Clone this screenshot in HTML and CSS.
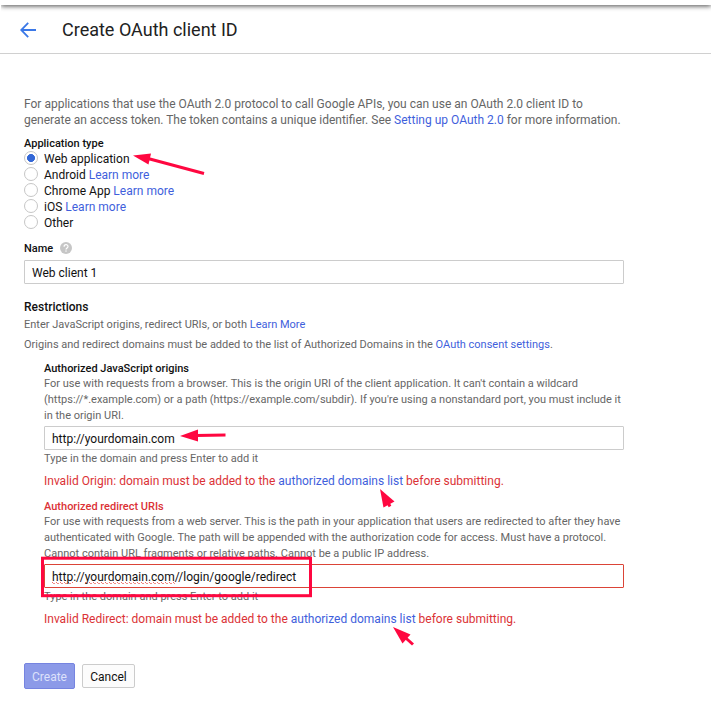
FILE: index.html
```html
<!DOCTYPE html>
<html lang="en">
<head>
<meta charset="utf-8">
<title>Create OAuth client ID</title>
<link rel="stylesheet" href="styles.css">
</head>
<body>
<div class="appbar"></div>
<header class="header">
  <svg class="back" width="16" height="16" viewBox="0 0 16 16"><path d="M16 8H1.5M8.2 .8L1.2 8l7 7.2" fill="none" stroke="#3b78e7" stroke-width="1.8"/></svg>
  <h1>Create OAuth client ID</h1>
</header>
<main class="content">
  <p class="intro">For applications that use the OAuth 2.0 protocol to call Google APIs, you can use an OAuth 2.0 client ID to generate an access token. The token contains a unique identifier. See <a>Setting up OAuth 2.0</a> for more information.</p>
  <div class="label type-label">Application type</div>
  <ul class="radios">
    <li><span class="radio checked"></span>Web application</li>
    <li><span class="radio"></span><span>Android <a>Learn more</a></span></li>
    <li><span class="radio"></span><span>Chrome App <a>Learn more</a></span></li>
    <li><span class="radio"></span><span>iOS <a>Learn more</a></span></li>
    <li><span class="radio"></span>Other</li>
  </ul>
  <div class="label name-label">Name
    <svg width="12" height="12" viewBox="0 0 12 12"><circle cx="6" cy="6" r="6" fill="#c6c6c6"/><path d="M4.1 4.7C4.1 2 8 2.1 8 4.5 8 5.9 6 6 6 7.6" fill="none" stroke="#fff" stroke-width="1.2"/><rect x="5.4" y="8.4" width="1.2" height="1.3" fill="#fff"/></svg>
  </div>
  <div class="field">Web client 1</div>
  <h2>Restrictions</h2>
  <p class="small">Enter JavaScript origins, redirect URIs, or both <a>Learn More</a></p>
  <p class="small domains">Origins and redirect domains must be added to the list of Authorized Domains in the <a>OAuth consent settings</a>.</p>
  <section class="group">
    <div class="label">Authorized JavaScript origins</div>
    <p class="small">For use with requests from a browser. This is the origin URI of the client application. It can't contain a wildcard (https://*.example.com) or a path (https://example.com/subdir). If you're using a nonstandard port, you must include it in the origin URI.</p>
    <div class="field">http://yourdomain.com</div>
    <p class="small hint">Type in the domain and press Enter to add it</p>
    <p class="error">Invalid Origin: domain must be added to the <a>authorized domains list</a> before submitting.</p>
  </section>
  <section class="group redirect">
    <div class="label invalid">Authorized redirect URIs</div>
    <p class="small">For use with requests from a web server. This is the path in your application that users are redirected to after they have authenticated with Google. The path will be appended with the authorization code for access. Must have a protocol. Cannot contain URL fragments or relative paths. Cannot be a public IP address.</p>
    <div class="field invalid-field"><span class="spell">http</span>://<span class="spell">yourdomain.com</span>//login/google/redirect</div>
    <p class="small hint">Type in the domain and press Enter to add it</p>
    <p class="error">Invalid Redirect: domain must be added to the <a>authorized domains list</a> before submitting.</p>
  </section>
  <div class="actions">
    <button class="create">Create</button>
    <button class="cancel">Cancel</button>
  </div>
</main>
<svg class="marks" width="711" height="714" viewBox="0 0 711 714">
  <g fill="none" stroke="#ff0740" stroke-width="3">
    <path d="M148 158.500L204 173.500"/>
    <path d="M196 435.500L225.500 435"/>
    <path d="M387 501L390 506.500"/>
    <path d="M403 635.500L413 644.500"/>
    <rect x="42.500" y="558.200" width="268" height="37.500"/>
  </g>
  <g fill="#ff0740">
    <path d="M133 155.500L151 153.500L148.500 164.500Z"/>
    <path d="M180 436L198 429.500V441.500Z"/>
    <path d="M380 489L394.500 501.500L383.500 507.500Z"/>
    <path d="M393 627L410.500 634.500L402.500 643.500Z"/>
  </g>
</svg>
</body>
</html>
```
FILE: styles.css
```css
* { box-sizing: border-box; }
body {
  margin: 0;
  height: 714px;
  overflow: hidden;
  position: relative;
  background: #fff;
  color: #111;
  font: 12px/16px Roboto, sans-serif;
}
h1, h2, p, ul { margin: 0; padding: 0; font-weight: 400; }
a { color: #3f5fdc; }
.appbar {
  height: 5px;
  margin-left: 1px;
  background: #fff;
  box-shadow: 0 1px 5px rgba(0, 0, 0, .75);
  clip-path: inset(0 0 -9px 0);
}
.header {
  height: 49px;
  display: flex;
  align-items: center;
  gap: 26px;
  padding: 2px 0 0 20px;
  border-bottom: 1px solid #d0d0d0;
}
.back { display: block; }
.header h1 { font-size: 18px; line-height: 24px; color: #212121; }
.content { width: 624px; padding: 42px 0 0 24px; }
.intro { color: #666; }
.label { font-size: 11px; line-height: 14px; font-weight: 500; }
.type-label { margin-top: 9px; }
.radios { list-style: none; }
.radios li { height: 16px; display: flex; align-items: center; gap: 6px; }
.radio {
  width: 14px;
  height: 14px;
  margin-bottom: 2px;
  border: 1px solid #c6c6c6;
  border-radius: 50%;
  background: #fff;
}
.checked { background: radial-gradient(circle, #3367d6 3.7px, #fff 4.3px); }
.name-label { display: flex; align-items: center; gap: 7px; margin-top: 11px; }
.name-label svg { margin-bottom: 2px; }
.field {
  height: 24px;
  padding: 4px 7px;
  border: 1px solid #ccc;
  border-radius: 1px;
  line-height: 16px;
}
.name-label + .field { margin-top: 4px; }
h2 { margin-top: 15px; font-size: 12px; font-weight: 500; }
.small { font-size: 11px; color: #666; }
h2 + .small { margin-top: 2px; }
.domains { margin-top: 4px; }
.group { margin: 9px 0 0 20px; }
.group .field { margin-top: 2px; }
.group .small { width: 582px; }
.hint { margin-top: 1px; }
.error { margin-top: 6px; color: #db3236; }
.invalid { color: #db3236; }
.group .invalid-field { border-color: #db4437; }
.redirect { margin-top: 11px; }
.spell {
  background:
    linear-gradient(90deg, #f0706a 1px, transparent 1px) 0 calc(100% - 1px) / 4px 1px repeat-x,
    linear-gradient(90deg, transparent 1px, #f0908a 1px, #f0908a 3px, transparent 3px) 0 100% / 4px 1px repeat-x;
}
.actions { display: flex; align-items: center; gap: 7px; margin-top: 36px; }
.actions button {
  height: 24px;
  padding: 1px 0 0;
  border: 1px solid #ccc;
  border-radius: 2px;
  font: 12px/16px Roboto, sans-serif;
}
.actions .create { width: 51px; height: 26px; background: #8c9ae8; border-color: #7684e0; color: #dde1fb; }
.actions .cancel { width: 53px; background: #fcfcfc; color: #111; }
.marks { position: absolute; left: 0; top: 0; }
```
